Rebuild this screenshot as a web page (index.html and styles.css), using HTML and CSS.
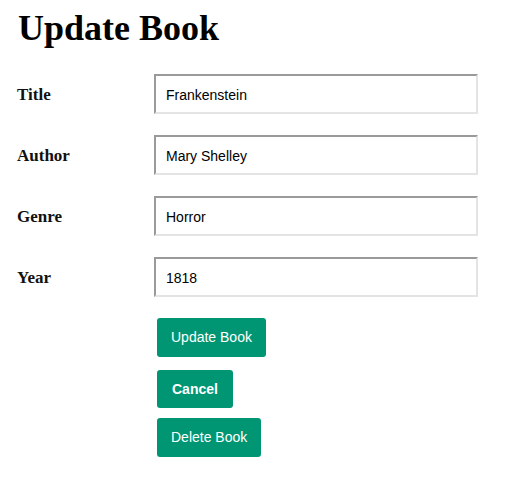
FILE: index.html
```html
<!DOCTYPE html>
<html>
<head>
<meta charset="utf-8">
<link rel="stylesheet" href="styles.css">
</head>
<body>
<div class="page">
  <h1 class="heading">Update Book</h1>
  <form class="form">
    <label class="label" for="title">Title</label>
    <input class="field" id="title" type="text" value="Frankenstein">
    <label class="label" for="author">Author</label>
    <input class="field" id="author" type="text" value="Mary Shelley">
    <label class="label" for="genre">Genre</label>
    <input class="field" id="genre" type="text" value="Horror">
    <label class="label" for="year">Year</label>
    <input class="field" id="year" type="text" value="1818">
    <div class="actions">
      <button class="btn" type="button">Update Book</button>
      <button class="btn btn-cancel" type="button">Cancel</button>
      <button class="btn btn-delete" type="button">Delete Book</button>
    </div>
  </form>
</div>
</body>
</html>
```
FILE: styles.css
```css
html, body {
  margin: 0;
  padding: 0;
  background: #fff;
}
.page {
  padding: 8px 17px 0 17px;
  font-family: "Liberation Serif", serif;
  color: #000;
}
.heading {
  margin: 0 0 25px 0;
  font-size: 36px;
  line-height: 41px;
  font-weight: bold;
  padding-left: 1px;
}
.form {
  display: grid;
  grid-template-columns: 137px 324px;
  row-gap: 21px;
  align-items: center;
}
.label {
  font-size: 17px;
  font-weight: bold;
  color: #111;
  padding-top: 1px;
}
.field {
  box-sizing: border-box;
  width: 324px;
  height: 40px;
  margin: 0;
  padding: 1px 10px 0 10px;
  border: 2px solid;
  border-color: #9a9a9a #e4e4e4 #e4e4e4 #9a9a9a;
  font-family: "Liberation Sans", Arial, sans-serif;
  font-size: 14px;
  color: #000;
  background: #fff;
  outline: none;
}
.actions {
  grid-column: 2;
  display: flex;
  flex-direction: column;
  align-items: flex-start;
  padding-left: 3px;
}
.btn {
  margin: 0;
  padding: 11px 14px;
  line-height: 17px;
  border: none;
  border-radius: 3px;
  background: #009673;
  color: #fff;
  font-family: "Liberation Sans", Arial, sans-serif;
  font-size: 14px;
  cursor: pointer;
}
.btn-cancel {
  margin-top: 13px;
  padding: 11px 15px;
  line-height: 16px;
  font-weight: bold;
}
.btn-delete {
  margin-top: 10px;
}
```
